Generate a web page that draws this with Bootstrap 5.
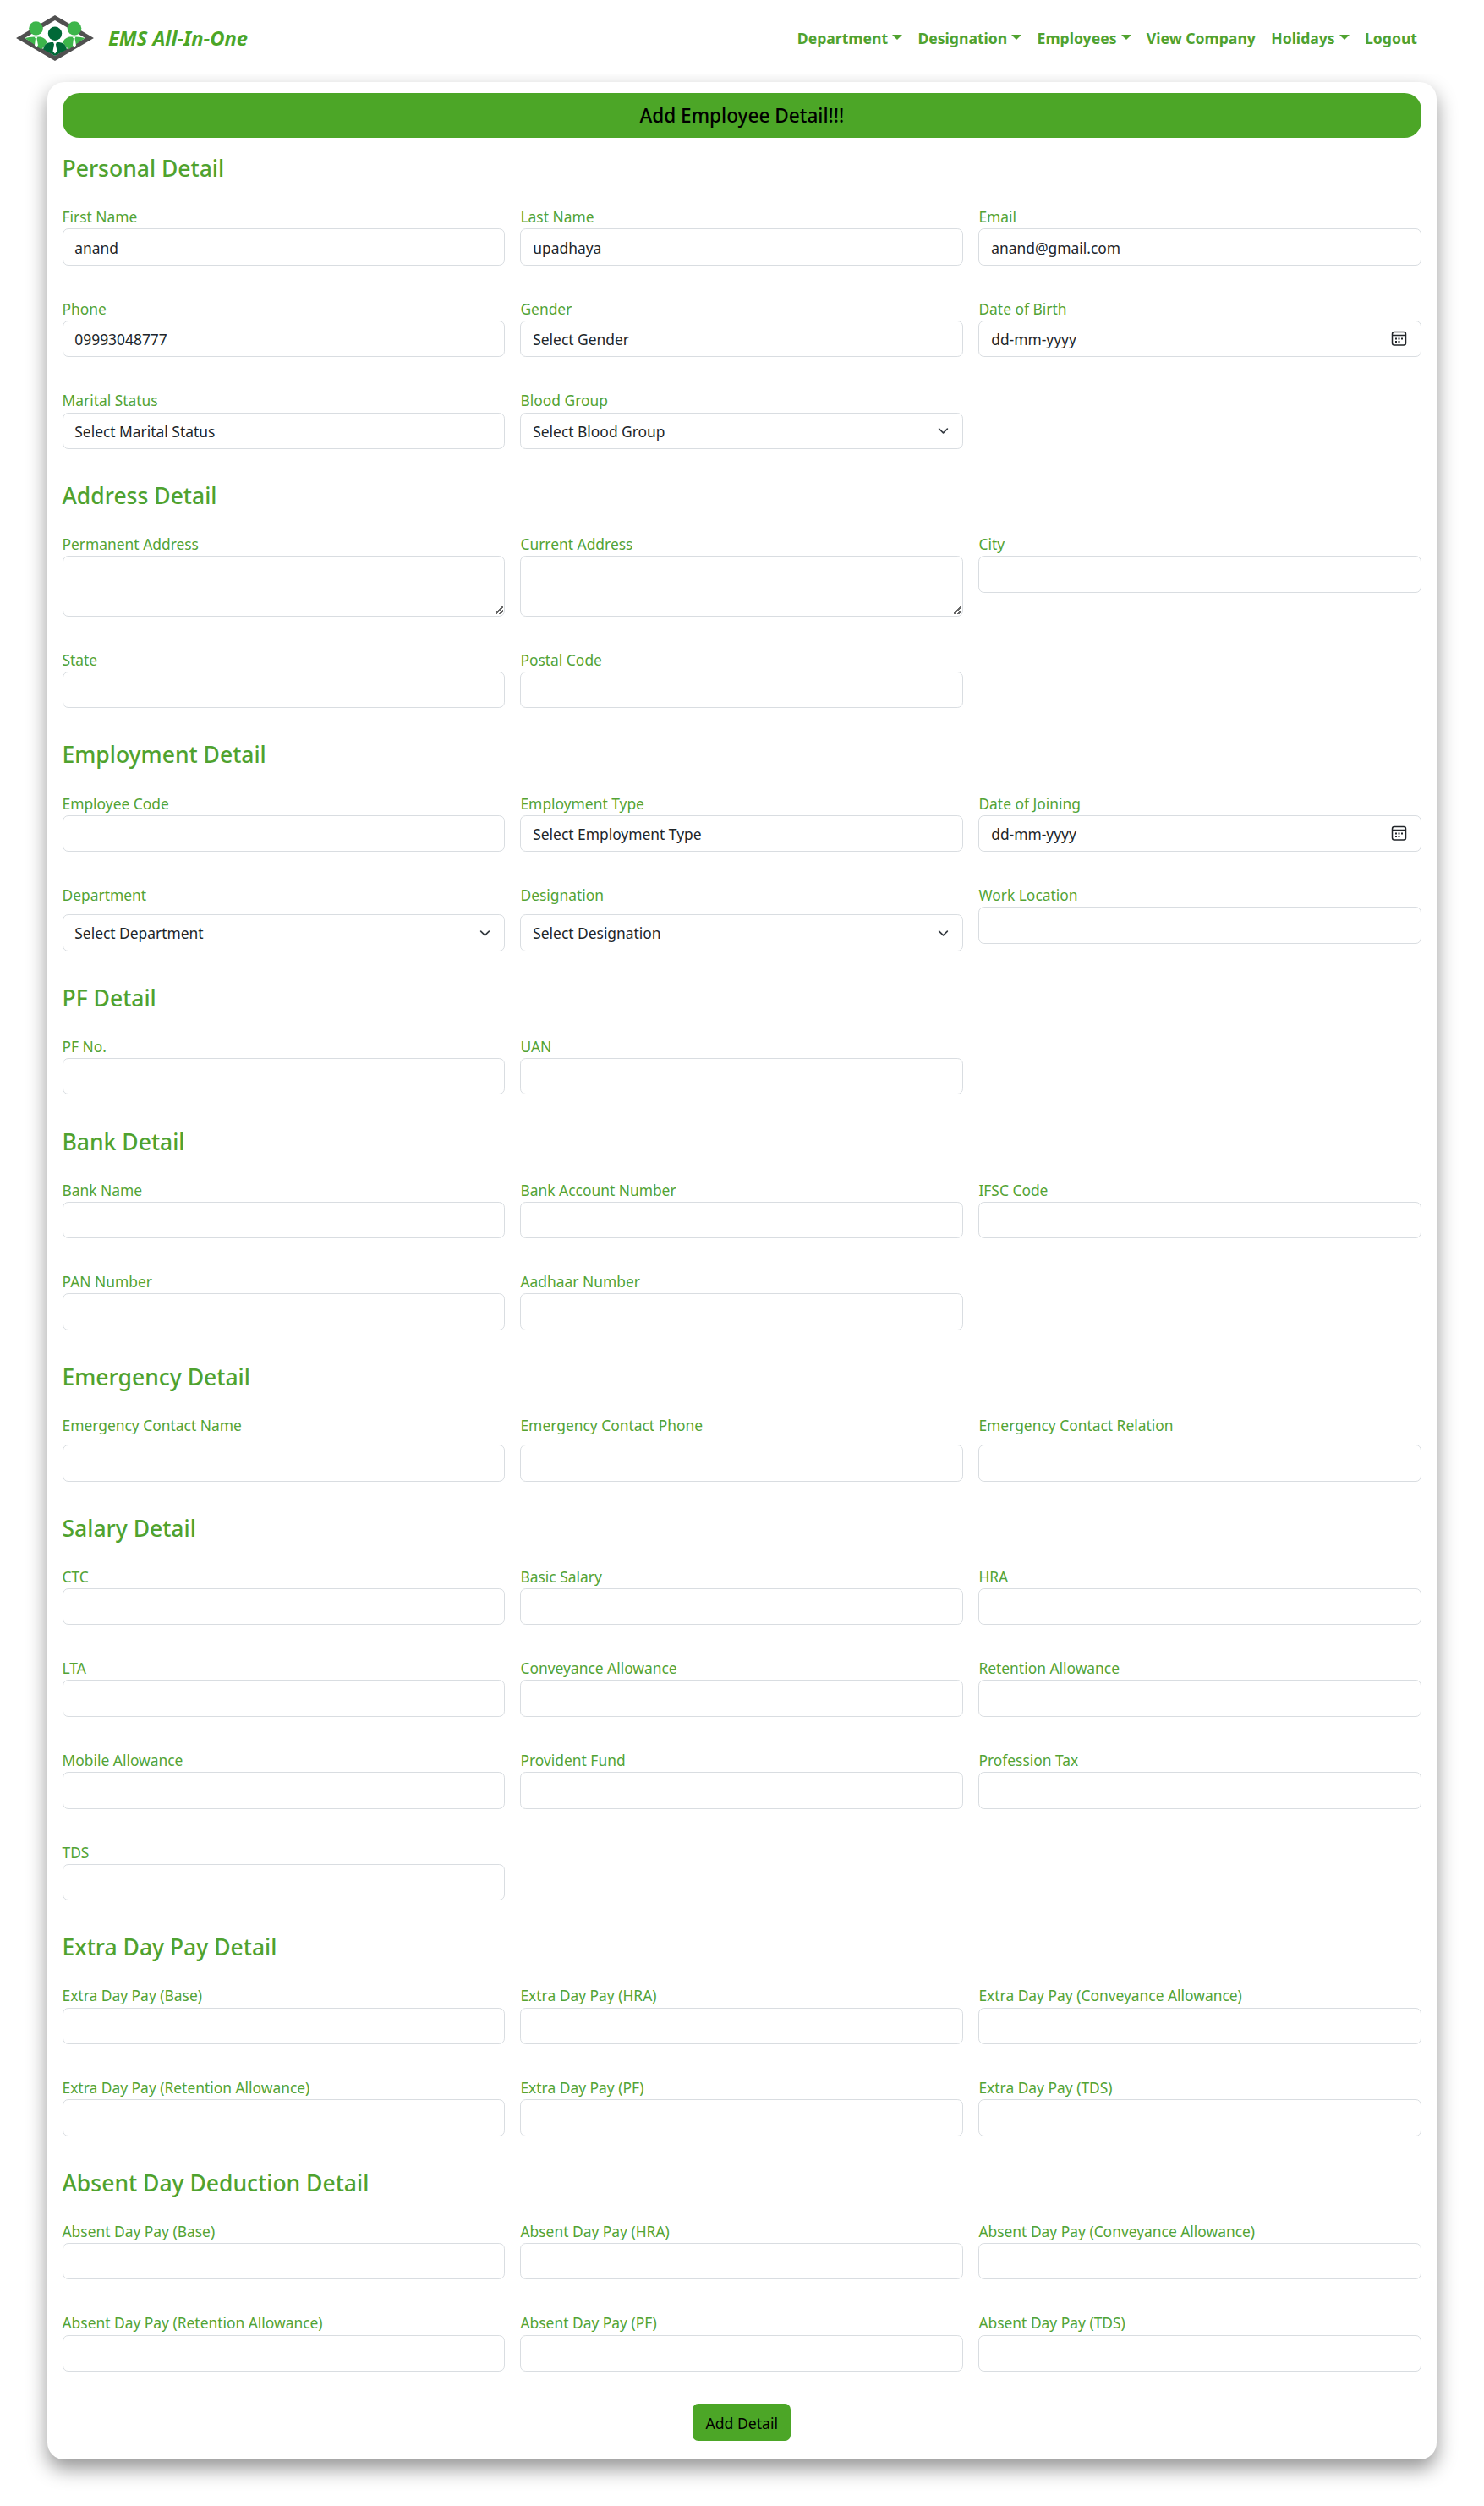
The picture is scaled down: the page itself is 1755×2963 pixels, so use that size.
<!DOCTYPE html>
<html lang="en">
<head>
<meta charset="utf-8">
<meta name="viewport" content="width=device-width, initial-scale=1">
<title>EMS All-In-One</title>
<link rel="stylesheet" href="https://cdn.jsdelivr.net/npm/bootstrap@5.3.0/dist/css/bootstrap.min.css">
<style>
:root{--ems-green:#4ca627}
body{font-family:"Noto Sans","Open Sans",sans-serif;font-size:17.4px;line-height:27.15px;background:#fff}
.ems-nav{height:88px;padding:0 79px 0 18px;background:#fff;position:relative;z-index:1}
.ems-brand{font-size:23.7px;font-weight:700;font-style:italic;color:var(--ems-green);margin:0;padding:1px 0 0}
.ems-brand:hover{color:var(--ems-green)}
.ems-brand svg{width:94px;height:58px}
.ems-brand span{padding-top:2px}
.ems-menu{gap:18.3px}
.ems-menu .nav-link{padding:3px 0 0;color:#4fa22f;font-size:17.6px;font-weight:700}
.ems-menu .dropdown-toggle::after{margin-left:5px;border-top-width:6px;border-left-width:6px;border-right-width:6px;vertical-align:5px}
.ems-panel{margin:9px 56px 54px 55.5px;padding:13px 18px 22.5px;border-radius:20px;background:#fff;box-shadow:0 11px 23px rgba(0,0,0,.42)}
.ems-banner{height:52.5px;margin-bottom:19.6px;padding-top:1px;border-radius:20px;background:var(--ems-green);color:#000;font-size:22.6px;font-weight:500}
.ems-panel h4{font-size:26.5px;font-weight:500;line-height:35px;height:32.6px;margin:0 0 28.45px;color:#4fa22f}
.ems-grid{--bs-gutter-x:18.4px}
.ems-grid>div{margin-bottom:38.1px}
.ems-grid label,.ems-grid .form-label{display:block;height:27.15px;line-height:27.8px;color:#52a335}
.ems-grid .form-label{margin-bottom:9px}
.ems-grid .form-control,.ems-grid .form-select{display:block;height:43.45px;padding:7.6px 13.8px 6px;border-color:#d9dde1;border-radius:6.8px;font-size:17.4px;line-height:27.15px;color:#212529}
.ems-grid .form-select{background-size:17px 13px;background-position:right 14.5px center}
.ems-grid textarea.form-control{height:71.4px}
.ems-grid textarea::-webkit-resizer{background:linear-gradient(135deg,transparent 42%,#666 42%,#666 56%,transparent 56%,transparent 72%,#666 72%,#666 86%,transparent 86%) right 1px bottom 2px/9px 9px no-repeat}
.ems-grid div.form-control{display:flex}
.ems-date svg{width:19px;height:19px;margin:0 2px 1px 0}
.ems-submit{width:116px;height:43.45px;padding:2px 0 0;border-radius:6.8px;background:var(--ems-green);color:#000;font-size:17.6px}
</style>
</head>
<body>
<nav class="ems-nav d-flex align-items-center justify-content-between">
  <a class="ems-brand navbar-brand d-flex align-items-center" href="#">
    <svg class="me-3" viewBox="0 0 94 58" aria-hidden="true">
      <path d="M47 5 88 29 47 53 6 29Z" fill="#fff" stroke="#505050" stroke-width="5"/>
      <g fill="#3db54a">
        <circle cx="24.500" cy="17.500" r="8.300"/><circle cx="70" cy="17.500" r="8.300"/>
        <path d="M11.500 29q5-1.500 10.500-1.500h8q7 2 7.500 7L31 42.500Z"/>
        <path d="M82.500 29q-5-1.500-10.500-1.500h-8q-7 2-7.500 7L63 42.500Z"/>
      </g>
      <path d="m22.500 27.500h4l-1 2 1.500 8-2 2.500-2-2.500 1-8ZM67.500 27.500h4l-1 2 1.500 8-2 2.500-2-2.500 1-8Z" fill="#fff"/>
      <circle cx="47" cy="23.800" r="9.200" fill="#fff"/><circle cx="47" cy="23.800" r="8.200" fill="#006837"/>
      <path d="M33 42.500q1-8 9-8.500h10q8 .5 9 8.500L47 50Z" fill="#006837"/>
      <path d="M45 34h4l-1 2.500 1.500 8L47 47.500l-2.500-3 1.500-8Z" fill="#fff"/>
    </svg><span>EMS All-In-One</span>
  </a>
  <ul class="ems-menu nav flex-nowrap">
    <li class="nav-item"><a class="nav-link dropdown-toggle" href="#">Department</a></li>
    <li class="nav-item"><a class="nav-link dropdown-toggle" href="#">Designation</a></li>
    <li class="nav-item"><a class="nav-link dropdown-toggle" href="#">Employees</a></li>
    <li class="nav-item"><a class="nav-link" href="#">View Company</a></li>
    <li class="nav-item"><a class="nav-link dropdown-toggle" href="#">Holidays</a></li>
    <li class="nav-item"><a class="nav-link" href="#">Logout</a></li>
  </ul>
</nav>

<main class="ems-panel">
  <div class="ems-banner d-flex align-items-center justify-content-center">Add Employee Detail!!!</div>

  <h4>Personal Detail</h4>
  <div class="row ems-grid">
    <div class="col-4"><label>First Name</label><input class="form-control" type="text" value="anand"></div>
    <div class="col-4"><label>Last Name</label><input class="form-control" type="text" value="upadhaya"></div>
    <div class="col-4"><label>Email</label><input class="form-control" type="email" value="anand@gmail.com"></div>
    <div class="col-4"><label>Phone</label><input class="form-control" type="text" value="09993048777"></div>
    <div class="col-4"><label>Gender</label><select class="form-control"><option>Select Gender</option></select></div>
    <div class="col-4"><label>Date of Birth</label>
      <div class="form-control ems-date align-items-center justify-content-between"><span>dd-mm-yyyy</span>
        <svg viewBox="0 0 19 19" fill="none" stroke="#212529" stroke-width="1.500"><rect x="1.500" y="1.500" width="16" height="15.500" rx="2.500"/><path d="M1.500 5.500h16"/><path d="M5 9.500h2m1.500 0h2m1.500 0h2M5 13h2m1.500 0h2" stroke-width="2"/></svg></div></div>
    <div class="col-4"><label>Marital Status</label><select class="form-control"><option>Select Marital Status</option></select></div>
    <div class="col-4"><label>Blood Group</label><select class="form-select"><option>Select Blood Group</option></select></div>
  </div>

  <h4>Address Detail</h4>
  <div class="row ems-grid">
    <div class="col-4"><label>Permanent Address</label><textarea class="form-control"></textarea></div>
    <div class="col-4"><label>Current Address</label><textarea class="form-control"></textarea></div>
    <div class="col-4"><label>City</label><input class="form-control" type="text"></div>
    <div class="col-4"><label>State</label><input class="form-control" type="text"></div>
    <div class="col-4"><label>Postal Code</label><input class="form-control" type="text"></div>
  </div>

  <h4>Employment Detail</h4>
  <div class="row ems-grid">
    <div class="col-4"><label>Employee Code</label><input class="form-control" type="text"></div>
    <div class="col-4"><label>Employment Type</label><select class="form-control"><option>Select Employment Type</option></select></div>
    <div class="col-4"><label>Date of Joining</label>
      <div class="form-control ems-date align-items-center justify-content-between"><span>dd-mm-yyyy</span>
        <svg viewBox="0 0 19 19" fill="none" stroke="#212529" stroke-width="1.500"><rect x="1.500" y="1.500" width="16" height="15.500" rx="2.500"/><path d="M1.500 5.500h16"/><path d="M5 9.500h2m1.500 0h2m1.500 0h2M5 13h2m1.500 0h2" stroke-width="2"/></svg></div></div>
    <div class="col-4"><label class="form-label">Department</label><select class="form-select"><option>Select Department</option></select></div>
    <div class="col-4"><label class="form-label">Designation</label><select class="form-select"><option>Select Designation</option></select></div>
    <div class="col-4"><label>Work Location</label><input class="form-control" type="text"></div>
  </div>

  <h4>PF Detail</h4>
  <div class="row ems-grid">
    <div class="col-4"><label>PF No.</label><input class="form-control" type="text"></div>
    <div class="col-4"><label>UAN</label><input class="form-control" type="text"></div>
  </div>

  <h4>Bank Detail</h4>
  <div class="row ems-grid">
    <div class="col-4"><label>Bank Name</label><input class="form-control" type="text"></div>
    <div class="col-4"><label>Bank Account Number</label><input class="form-control" type="text"></div>
    <div class="col-4"><label>IFSC Code</label><input class="form-control" type="text"></div>
    <div class="col-4"><label>PAN Number</label><input class="form-control" type="text"></div>
    <div class="col-4"><label>Aadhaar Number</label><input class="form-control" type="text"></div>
  </div>

  <h4>Emergency Detail</h4>
  <div class="row ems-grid">
    <div class="col-4"><label class="form-label">Emergency Contact Name</label><input class="form-control" type="text"></div>
    <div class="col-4"><label class="form-label">Emergency Contact Phone</label><input class="form-control" type="text"></div>
    <div class="col-4"><label class="form-label">Emergency Contact Relation</label><input class="form-control" type="text"></div>
  </div>

  <h4>Salary Detail</h4>
  <div class="row ems-grid">
    <div class="col-4"><label>CTC</label><input class="form-control" type="text"></div>
    <div class="col-4"><label>Basic Salary</label><input class="form-control" type="text"></div>
    <div class="col-4"><label>HRA</label><input class="form-control" type="text"></div>
    <div class="col-4"><label>LTA</label><input class="form-control" type="text"></div>
    <div class="col-4"><label>Conveyance Allowance</label><input class="form-control" type="text"></div>
    <div class="col-4"><label>Retention Allowance</label><input class="form-control" type="text"></div>
    <div class="col-4"><label>Mobile Allowance</label><input class="form-control" type="text"></div>
    <div class="col-4"><label>Provident Fund</label><input class="form-control" type="text"></div>
    <div class="col-4"><label>Profession Tax</label><input class="form-control" type="text"></div>
    <div class="col-4"><label>TDS</label><input class="form-control" type="text"></div>
  </div>

  <h4>Extra Day Pay Detail</h4>
  <div class="row ems-grid">
    <div class="col-4"><label>Extra Day Pay (Base)</label><input class="form-control" type="text"></div>
    <div class="col-4"><label>Extra Day Pay (HRA)</label><input class="form-control" type="text"></div>
    <div class="col-4"><label>Extra Day Pay (Conveyance Allowance)</label><input class="form-control" type="text"></div>
    <div class="col-4"><label>Extra Day Pay (Retention Allowance)</label><input class="form-control" type="text"></div>
    <div class="col-4"><label>Extra Day Pay (PF)</label><input class="form-control" type="text"></div>
    <div class="col-4"><label>Extra Day Pay (TDS)</label><input class="form-control" type="text"></div>
  </div>

  <h4>Absent Day Deduction Detail</h4>
  <div class="row ems-grid">
    <div class="col-4"><label>Absent Day Pay (Base)</label><input class="form-control" type="text"></div>
    <div class="col-4"><label>Absent Day Pay (HRA)</label><input class="form-control" type="text"></div>
    <div class="col-4"><label>Absent Day Pay (Conveyance Allowance)</label><input class="form-control" type="text"></div>
    <div class="col-4"><label>Absent Day Pay (Retention Allowance)</label><input class="form-control" type="text"></div>
    <div class="col-4"><label>Absent Day Pay (PF)</label><input class="form-control" type="text"></div>
    <div class="col-4"><label>Absent Day Pay (TDS)</label><input class="form-control" type="text"></div>
  </div>

  <div class="d-flex justify-content-center"><button class="btn ems-submit" type="button">Add Detail</button></div>
</main>
<script src="https://cdn.jsdelivr.net/npm/bootstrap@5.3.0/dist/js/bootstrap.bundle.min.js"></script>
</body>
</html>
